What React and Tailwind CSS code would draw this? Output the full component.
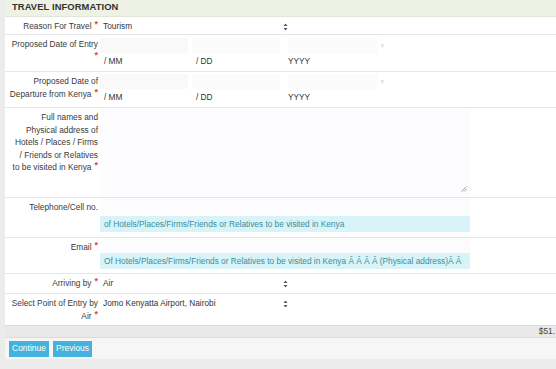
import React from 'react';

const Req = () => <span className="text-[#e0443e] text-[9px] font-bold align-top relative top-[-2px] ml-[3px]">*</span>;

const Arrows = () => (
  <svg width="5" height="8" viewBox="0 0 5 8" className="mr-[2px]">
    <path d="M2.5 0.5 L4.5 3 L0.5 3 Z" fill="#555" />
    <path d="M2.5 7.5 L4.5 5 L0.5 5 Z" fill="#555" />
  </svg>
);

const Row = ({ label, children, className = '' }) => (
  <div className={`flex border-b border-[#e6e6e6] ${className}`}>
    <div className="w-[95px] shrink-0 text-right pr-[2px] pt-[3px] text-[#3a3a3a] leading-[12.5px]">{label}</div>
    <div className="flex-1 min-w-0">{children}</div>
  </div>
);

const Select = ({ value }) => (
  <div className="w-[190px] flex items-center justify-between pl-[3px] h-[15px] mt-[2px] text-[#333]">
    <span>{value}</span>
    <Arrows />
  </div>
);

const DateField = () => (
  <div>
    <div className="flex items-center h-[15px] mt-[3px]">
      <div className="w-[88px] h-full bg-[#f9f9fa]" />
      <div className="w-[4px]" />
      <div className="w-[88px] h-full bg-[#fbfbfc]" />
      <div className="w-[8px]" />
      <div className="w-[90px] h-full bg-[#fbfbfc]" />
      <span className="ml-[3px] text-[5px] text-[#bbb]">≡</span>
    </div>
    <div className="flex text-[#333] mt-[2px]">
      <span className="w-[92px] pl-[4px]">/ MM</span>
      <span className="w-[92px] pl-[4px]">/ DD</span>
      <span className="w-[92px] pl-[4px]">YYYY</span>
    </div>
  </div>
);

const Hint = ({ children }) => (
  <div className="w-[370px] h-[16px] bg-[#d8f4f9] text-[#3a8e9b] pl-[4px] flex items-center whitespace-nowrap overflow-hidden">
    {children}
  </div>
);

export default function App() {
  return (
    <div className="min-h-screen bg-[#ececec] pl-[5px] text-[8.3px]" style={{ fontFamily: '"Liberation Sans", Arial, sans-serif' }}>
      <div className="bg-white">
        <div className="h-[17px] bg-[#eef2e4] border-b border-[#e2e6d8] pl-[7px] pb-[1px] flex items-center font-bold text-[9.4px] text-[#333] tracking-[0.1px]">
          TRAVEL INFORMATION
        </div>

        <Row className="h-[18px]" label={<>Reason For Travel<Req /></>}>
          <Select value="Tourism" />
        </Row>

        <Row className="h-[37px]" label={<>Proposed Date of Entry <br /><Req /></>}>
          <DateField />
        </Row>

        <Row className="h-[36px]" label={<>Proposed Date of<br />Departure from Kenya<Req /></>}>
          <div className="mt-[-1px]"><DateField /></div>
        </Row>

        <Row className="h-[90px]" label={<>Full names and<br />Physical address of<br />Hotels / Places / Firms<br />/ Friends or Relatives<br />to be visited in Kenya<Req /></>}>
          <div className="relative w-[370px] h-[89px] bg-[#fcfbfe]">
            <svg width="6" height="6" viewBox="0 0 6 6" className="absolute right-[3px] bottom-[5px]">
              <path d="M5.5 0.5 L0.5 5.5 M5.5 3 L3 5.5" stroke="#888" strokeWidth="0.8" />
            </svg>
          </div>
        </Row>

        <Row className="h-[40px]" label="Telephone/Cell no.">
          <div className="w-[370px] h-[17px] bg-[#fcfbfe] mt-[1px]" />
          <Hint>of Hotels/Places/Firms/Friends or Relatives to be visited in Kenya</Hint>
        </Row>

        <Row className="h-[36px]" label={<>Email<Req /></>}>
          <div className="w-[370px] h-[14px] bg-[#fcfbfe] mt-[1px]" />
          <Hint>Of Hotels/Places/Firms/Friends or Relatives to be visited in Kenya Â Â Â Â (Physical address)Â Â</Hint>
        </Row>

        <Row className="h-[20px]" label={<>Arriving by<Req /></>}>
          <Select value="Air" />
        </Row>

        <div className="flex h-[31px]">
          <div className="w-[95px] shrink-0 text-right pr-[2px] pt-[3px] text-[#3a3a3a] leading-[13px]">
            Select Point of Entry by<br />Air<Req />
          </div>
          <div className="flex-1">
            <Select value="Jomo Kenyatta Airport, Nairobi" />
          </div>
        </div>

        <div className="h-[13px] bg-[#e9e9e9] border-t border-b border-[#dcdcdc] flex items-center justify-end pr-[1px] text-[#444]">
          $51.
        </div>

        <div className="h-[21px] bg-[#f6f6f6] flex items-center gap-[4px] pl-[4px]">
          <button className="h-[16px] px-[3px] bg-[#44b2dc] text-white text-[8.5px]">Continue</button>
          <button className="h-[16px] px-[3px] bg-[#44b2dc] text-white text-[8.5px]">Previous</button>
        </div>
      </div>
    </div>
  );
}
